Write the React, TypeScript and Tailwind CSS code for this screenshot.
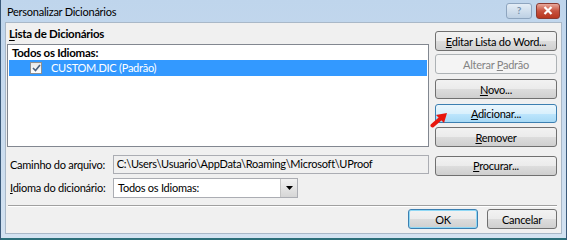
import React from 'react';

const font = { fontFamily: 'Lato, "Noto Sans", sans-serif' };

function Btn({ children, variant = 'normal', className = '' }: { children: React.ReactNode; variant?: 'normal' | 'hover' | 'disabled' | 'default'; className?: string }) {
  const base = 'flex items-center justify-center rounded-[3px] border text-[11px] leading-none whitespace-nowrap shrink-0';
  const styles = {
    normal: 'border-[#707070] bg-[linear-gradient(#f2f2f2_0%,#ebebeb_50%,#dddddd_50%,#cfcfcf_100%)] text-black',
    hover: 'border-[#3c7fb1] bg-[linear-gradient(#eaf6fd_0%,#d9f0fc_50%,#bee6fd_50%,#a7d9f5_100%)] text-black',
    disabled: 'border-[#adb2b5] bg-[#f4f4f4] text-[#838383]',
    default: 'border-[#3c7fb1] bg-[linear-gradient(#f2f2f2_0%,#ebebeb_50%,#dddddd_50%,#cfcfcf_100%)] text-black shadow-[inset_0_0_0_1px_#8fd8f5]',
  };
  return <div className={`${base} ${styles[variant]} ${className}`}>{children}</div>;
}

export default function App() {
  return (
    <div style={font} className="w-[567px] h-[240px] flex flex-col bg-[linear-gradient(#bfd5ec,#d3e2f1)] border-l border-r border-[#3b5a7a] text-[11px] tracking-[-0.25px] text-black overflow-hidden whitespace-nowrap">
      {/* title bar */}
      <div className="h-[22px] flex items-center justify-between pl-[6px] pr-[6px] shrink-0">
        <span className="text-[11px] text-black mt-[2px]">Personalizar Dicionários</span>
        <div className="flex gap-[4px] mt-[-1px]">
          <div className="w-[26px] h-[16px] rounded-[3px] border border-[#8ea5bf] bg-[linear-gradient(#e4edf6,#bdd0e4)] flex items-center justify-center text-[10px] font-bold text-[#7890ab]">?</div>
          <div className="w-[24px] h-[16px] rounded-[3px] border border-[#8a3a32] bg-[linear-gradient(#e9a99c,#c7523f_50%,#b8361f)] flex items-center justify-center">
            <svg width="10" height="9" viewBox="0 0 10 9"><path d="M1.5 1L8.5 8M8.5 1L1.5 8" stroke="#fff" strokeWidth="2.2" /></svg>
          </div>
        </div>
      </div>

      {/* client area */}
      <div className="h-[212px] shrink-0 mx-[4px] bg-[#f0f0f0] border border-[#a9b8c8] flex flex-col">
        <div className="flex pr-[4px] pt-[8px] gap-[6px]">
          {/* left column */}
          <div className="w-[423px] flex flex-col">
            <div className="pl-[3px] h-[13px] font-bold leading-[5px] text-[11.5px]"><span className="underline underline-offset-2">L</span>ista de Dicionários</div>
            <div className="ml-[1px] h-[103px] bg-white border border-[#828790] flex flex-col pt-[1px]">
              <div className="pl-[4px] font-bold h-[14px] leading-[14px] text-[11.5px]">Todos os Idiomas:</div>
              <div className="h-[16px] mx-[1px] bg-[#3399ff] flex items-center pl-[21px] text-white">
                <div className="w-[12px] h-[12px] border border-[#8f8f8f] bg-[linear-gradient(#e8e8e8,#ffffff)] flex items-center justify-center">
                  <svg width="9" height="8" viewBox="0 0 9 8"><path d="M1 4L3.5 6.5L8 1" stroke="#4a5f7c" strokeWidth="1.6" fill="none" /></svg>
                </div>
                <span className="ml-[9px]">CUSTOM.DIC (Padrão)</span>
              </div>
            </div>
          </div>

          {/* right buttons */}
          <div className="w-[122px] flex flex-col">
            <Btn className="h-[20px]"><span><span className="underline">E</span>ditar Lista do Word...</span></Btn>
            <Btn variant="disabled" className="h-[20px] mt-[3px]"><span>Alterar <span className="underline">P</span>adrão</span></Btn>
            <Btn className="h-[20px] mt-[5px]"><span><span className="underline">N</span>ovo...</span></Btn>
            <div className="relative mt-[5px]">
              <Btn variant="hover" className="h-[19px]"><span><span className="underline">A</span>dicionar...</span></Btn>
              <svg className="absolute left-[-5px] top-[8px]" width="20" height="16" viewBox="0 0 20 16">
                <path d="M2.5 13.5L10 7" stroke="#e8160c" strokeWidth="4" strokeLinecap="round" />
                <path d="M6 3L17 1L14 11Z" fill="#e8160c" />
              </svg>
            </div>
            <Btn className="h-[20px] mt-[4px]"><span><span className="underline">R</span>emover</span></Btn>
          </div>
        </div>

        {/* path row */}
        <div className="flex items-center h-[21px] pl-[4px] pr-[4px] mt-[8px]">
          <div className="w-[103px]">Caminho do arquivo:</div>
          <div className="w-[317px] h-[19px] border border-[#abadb3] bg-[#f0f0f0] flex items-center pl-[3px] mt-[-2px]">C:\Users\Usuario\AppData\Roaming\Microsoft\UProof</div>
          <Btn className="w-[122px] h-[20px] ml-[6px]"><span><span className="underline">P</span>rocurar...</span></Btn>
        </div>

        {/* language row */}
        <div className="flex items-center pl-[4px] mt-[2px]">
          <div className="w-[103px]"><span className="underline">I</span>dioma do dicionário:</div>
          <div className="w-[185px] h-[20px] border border-[#abadb3] bg-white flex items-center">
            <span className="flex-1 pl-[4px]">Todos os Idiomas:</span>
            <div className="w-[17px] h-[18px] border-l border-[#c4c4c4] bg-[linear-gradient(#f2f2f2,#d6d6d6)] flex items-center justify-center">
              <svg width="7" height="4" viewBox="0 0 7 4"><path d="M0 0H7L3.5 4Z" fill="#000" /></svg>
            </div>
          </div>
        </div>

        {/* separator */}
        <div className="ml-[2px] mr-[4px] mt-[7px] h-[2px] border-t border-[#a0a0a0] border-b border-b-white" />

        {/* bottom buttons */}
        <div className="flex justify-end gap-[9px] pr-[4px] mt-[2px]">
          <Btn variant="default" className="w-[70px] h-[20px]">OK</Btn>
          <Btn className="w-[70px] h-[20px]">Cancelar</Btn>
        </div>
      </div>
      <div className="flex-1" />
      <div className="h-[2px] bg-[#2b6f7a] shrink-0" />
    </div>
  );
}
